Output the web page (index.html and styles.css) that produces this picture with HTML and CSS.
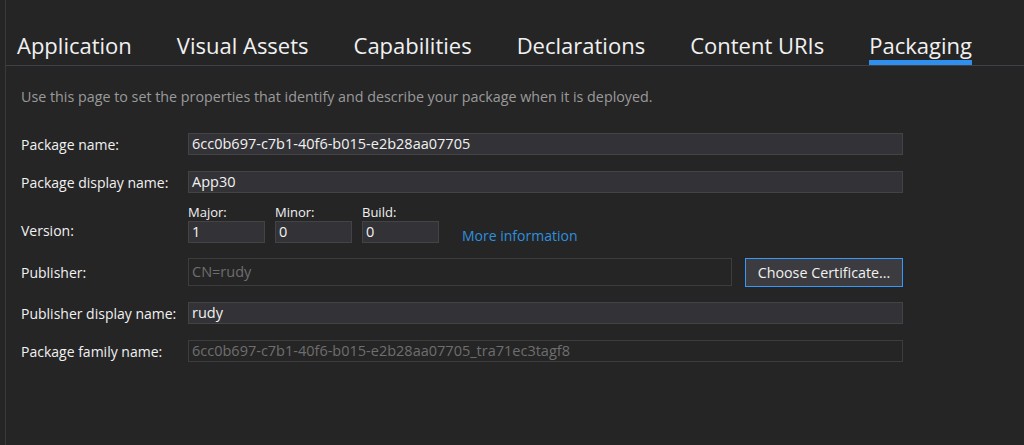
FILE: index.html
```html
<!DOCTYPE html>
<html>
<head>
<meta charset="utf-8">
<link rel="stylesheet" href="styles.css">
</head>
<body>
<div class="frame">
  <nav class="tabs">
    <span class="tab">Application</span>
    <span class="tab">Visual Assets</span>
    <span class="tab">Capabilities</span>
    <span class="tab">Declarations</span>
    <span class="tab">Content URIs</span>
    <span class="tab active">Packaging</span>
  </nav>
  <div class="content">
    <p class="desc">Use this page to set the properties that identify and describe your package when it is deployed.</p>
    <div class="form">
      <label class="lbl">Package name:</label>
      <div class="field">6cc0b697-c7b1-40f6-b015-e2b28aa07705</div>

      <label class="lbl">Package display name:</label>
      <div class="field">App30</div>

      <label class="lbl lbl-version">Version:</label>
      <div class="version">
        <div class="vpart"><span class="sub">Major:</span><div class="field">1</div></div>
        <div class="vpart"><span class="sub">Minor:</span><div class="field">0</div></div>
        <div class="vpart"><span class="sub">Build:</span><div class="field">0</div></div>
        <a class="link">More information</a>
      </div>

      <label class="lbl">Publisher:</label>
      <div class="pub">
        <div class="field disabled tall">CN=rudy</div>
        <button class="btn">Choose Certificate...</button>
      </div>

      <label class="lbl">Publisher display name:</label>
      <div class="field">rudy</div>

      <label class="lbl">Package family name:</label>
      <div class="field disabled">6cc0b697-c7b1-40f6-b015-e2b28aa07705_tra71ec3tagf8</div>
    </div>
  </div>
</div>
</body>
</html>
```

FILE: styles.css
```css
html, body {
  margin: 0;
  padding: 0;
  background: #252526;
  height: 100%;
}
body {
  font-family: "Open Sans", "Noto Sans", sans-serif;
  color: #f1f1f1;
  overflow: hidden;
}
.frame {
  margin-left: 5px;
  border-left: 1px solid #3a3a3c;
  height: 445px;
  box-sizing: border-box;
}
.tabs {
  display: flex;
  gap: 45px;
  padding: 30px 0 0 11px;
  height: 35px;
  border-bottom: 1px solid #3f3f46;
  box-sizing: content-box;
}
.tab {
  font-size: 22px;
  line-height: 30px;
  color: #f1f1f1;
  height: 35px;
  box-sizing: border-box;
}
.tab.active {
  border-bottom: 5px solid #2e8fef;
}
.content {
  padding-left: 15px;
}
.desc {
  margin: 22px 0 0 0;
  font-size: 14.3px;
  line-height: 18px;
  color: #9a9a9a;
}
.form {
  display: grid;
  grid-template-columns: 167px 715px;
  row-gap: 16px;
  align-items: center;
  margin-top: 27px;
}
.lbl {
  font-size: 14px;
  color: #f1f1f1;
}
.lbl-version {
  align-self: end;
  padding-bottom: 3px;
}
.field {
  height: 22px;
  box-sizing: border-box;
  background: #333337;
  border: 1px solid #434346;
  font-size: 14.5px;
  line-height: 20px;
  padding-left: 3px;
  color: #f1f1f1;
  white-space: nowrap;
}
.field.disabled {
  background: transparent;
  border-color: #3d3d40;
  color: #6e6e6e;
}
.field.tall {
  height: 28px;
  line-height: 26px;
}
.version {
  display: flex;
  align-items: flex-end;
  gap: 10px;
  margin-top: -5px;
}
.vpart {
  display: flex;
  flex-direction: column;
  width: 77px;
}
.sub {
  font-size: 13px;
  line-height: 16px;
  color: #f1f1f1;
  margin-bottom: 1px;
}
.link {
  margin-left: 13px;
  font-size: 14px;
  color: #2f8fdf;
  line-height: 20px;
  margin-bottom: -3px;
}
.pub {
  display: flex;
  gap: 13px;
  margin-top: -1px;
  margin-bottom: -1px;
}
.pub .field {
  width: 544px;
}
.btn {
  width: 158px;
  height: 29px;
  background: #3c3c40;
  border: 1px solid #3399ff;
  color: #f1f1f1;
  font-family: "Open Sans", "Noto Sans", sans-serif;
  font-size: 14.3px;
  padding: 0;
}
```
